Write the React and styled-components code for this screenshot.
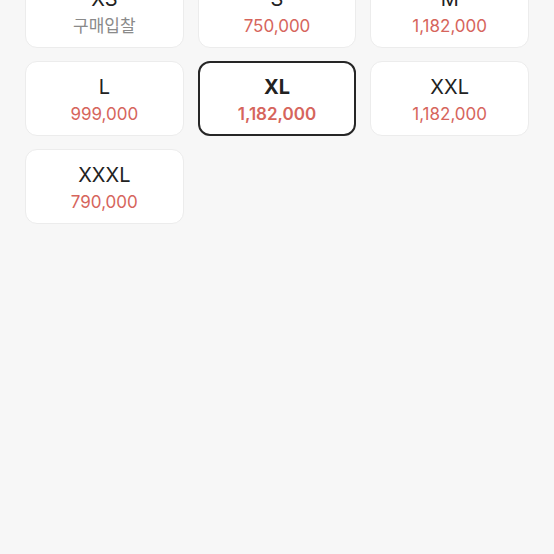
import React, { useState } from "react";
import styled, { createGlobalStyle } from "styled-components";

const GlobalStyle = createGlobalStyle`
  html, body {
    margin: 0;
    padding: 0;
    background: #f7f7f7;
    font-family: "Inter", "Noto Sans CJK KR", sans-serif;
  }
`;

const sizes = [
  { size: "XS", price: null },
  { size: "S", price: "750,000" },
  { size: "M", price: "1,182,000" },
  { size: "L", price: "999,000" },
  { size: "XL", price: "1,182,000" },
  { size: "XXL", price: "1,182,000" },
  { size: "XXXL", price: "790,000" },
];

const App = () => {
  const [selected, setSelected] = useState("XL");

  return (
    <Page>
      <GlobalStyle />
      <SizeGrid>
        {sizes.map((item) => (
          <SizeCard
            key={item.size}
            $active={selected === item.size}
            onClick={() => setSelected(item.size)}
          >
            <SizeName $active={selected === item.size}>{item.size}</SizeName>
            {item.price ? (
              <Price $active={selected === item.size}>{item.price}</Price>
            ) : (
              <Bid>구매입찰</Bid>
            )}
          </SizeCard>
        ))}
      </SizeGrid>
    </Page>
  );
};

const Page = styled.div`
  width: 554px;
  height: 554px;
  overflow: hidden;
  background: #f7f7f7;
`;

const SizeGrid = styled.div`
  display: grid;
  grid-template-columns: repeat(3, 1fr);
  column-gap: 14px;
  row-gap: 13px;
  padding: 0 25px;
  margin-top: -27px;
`;

const SizeCard = styled.button`
  height: 75px;
  box-sizing: border-box;
  display: flex;
  flex-direction: column;
  align-items: center;
  justify-content: center;
  gap: 5px;
  padding: 3px 0 0;
  background: #fff;
  border: ${(p) => (p.$active ? "2px solid #262626" : "1px solid #ececec")};
  border-radius: 12px;
  font-family: inherit;
  cursor: pointer;
`;

const SizeName = styled.span`
  font-size: 20px;
  line-height: 24px;
  color: #222;
  font-weight: ${(p) => (p.$active ? 700 : 400)};
`;

const Price = styled.span`
  font-size: 17px;
  line-height: 21px;
  color: #d6655c;
  font-weight: ${(p) => (p.$active ? 600 : 400)};
`;

const Bid = styled.span`
  font-size: 17px;
  line-height: 21px;
  color: #8a8a8a;
`;

export default App;
